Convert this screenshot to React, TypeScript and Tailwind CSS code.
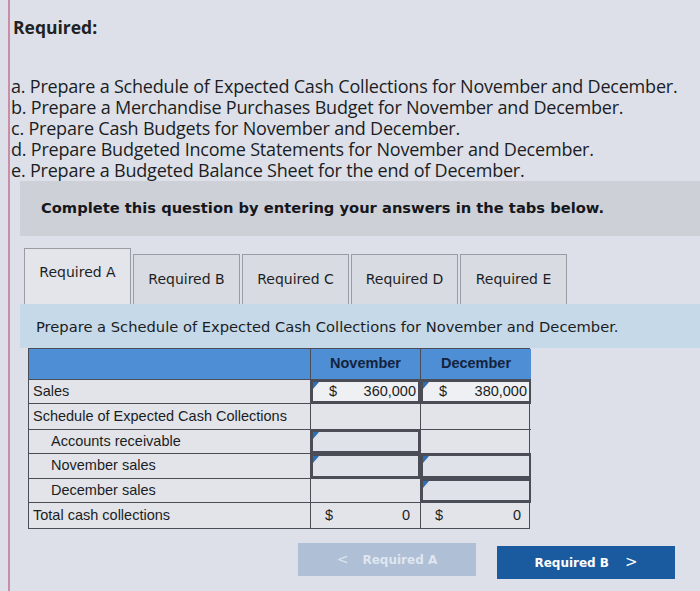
import React from "react";

const tabs = ["Required A", "Required B", "Required C", "Required D", "Required E"];

function Corner() {
    return <span className="absolute left-0 top-0 w-0 h-0 border-t-[7px] border-r-[6px] border-t-[#2f6db5] border-r-transparent" />;
}

function Money({ value, input }: { value: string; input?: boolean }) {
    return (
        <div className={`relative flex justify-between items-center h-full ${input ? "pl-[16px] pr-[2px] bg-[#eef0f3] border-2 border-[#4a4d55]" : "pl-[14px] pr-[10px]"}`}>
            {input && <Corner />}
            <span>$</span>
            <span>{value}</span>
        </div>
    );
}

function InputCell({ marker }: { marker?: boolean }) {
    return (
        <div className="relative h-full bg-[#dfe2e8] border-2 border-[#4a4d55]">
            {marker && <Corner />}
        </div>
    );
}

export default function App() {
    const list = [
        "a. Prepare a Schedule of Expected Cash Collections for November and December.",
        "b. Prepare a Merchandise Purchases Budget for November and December.",
        "c. Prepare Cash Budgets for November and December.",
        "d. Prepare Budgeted Income Statements for November and December.",
        "e. Prepare a Budgeted Balance Sheet for the end of December.",
    ];

    return (
        <div className="w-[700px] h-[591px] overflow-hidden bg-[#dde0e8] flex">
            <div className="w-[8px] shrink-0" />
            <div className="w-[2px] shrink-0 bg-[#c98ea6]" />
            <div className="flex-1 pt-[14px]">
                <h2 className="pl-[3px] text-[17.5px] leading-[27px] font-bold text-[#222] font-['Open_Sans',sans-serif]">Required:</h2>

                <div className="mt-[35px] pl-[1px] text-[18px] leading-[21px] text-[#1b1d24] font-['Open_Sans',sans-serif] tracking-[-0.2px]">
                    {list.map((l) => (
                        <p key={l}>{l}</p>
                    ))}
                </div>

                <div className="ml-[10px] h-[55px] bg-[#cdd0d6] flex items-center pl-[21px]">
                    <p className="text-[14.7px] font-bold text-[#15171c] font-['DejaVu_Sans',sans-serif]">
                        Complete this question by entering your answers in the tabs below.
                    </p>
                </div>

                <div className="ml-[10px] mt-[12px] flex gap-[2px] pl-[4px] font-['DejaVu_Sans',sans-serif] text-[14px] text-[#1d1f25]">
                    {tabs.map((t, i) => (
                        <div
                            key={t}
                            className={`w-[107px] flex items-center justify-center border border-[#9a9ca3] border-b-0 ${i === 0 ? "h-[56px] bg-[#e3e5ea] pb-[8px]" : "h-[50px] mt-[6px] bg-[#d8dbe1]"}`}
                        >
                            {t}
                        </div>
                    ))}
                </div>

                <div className="ml-[10px] bg-[#c6d9e8] pt-[12px] pb-[10px] pl-[16px] font-['DejaVu_Sans',sans-serif] text-[14.7px] leading-[22px] text-[#1b1d24]">
                    <p>Prepare a Schedule of Expected Cash Collections for November and December.</p>
                </div>

                <div className="ml-[18px] w-[502px] grid grid-cols-[282px_110px_110px] border border-[#4a4d55] font-['Liberation_Sans',sans-serif] text-[14.5px] text-[#1b1d24] bg-[#e2e4e9]">
                    <div className="h-[30px] bg-[#4d8ed4] border-r border-[#4a4d55]" />
                    <div className="h-[30px] bg-[#4d8ed4] border-r border-[#4a4d55] flex items-center justify-center font-bold text-[#14233d]">November</div>
                    <div className="h-[30px] bg-[#4d8ed4] flex items-center justify-center font-bold text-[#14233d]">December</div>

                    <div className="h-[24px] border-t border-r border-[#4a4d55] flex items-center pl-[4px]">Sales</div>
                    <div className="h-[24px] border-t border-r border-[#4a4d55]"><Money value="360,000" input /></div>
                    <div className="h-[24px] border-t border-[#4a4d55]"><Money value="380,000" input /></div>

                    <div className="h-[26px] border-t border-r border-[#4a4d55] flex items-center pl-[4px]">Schedule of Expected Cash Collections</div>
                    <div className="h-[26px] border-t border-r border-[#4a4d55]" />
                    <div className="h-[26px] border-t border-[#4a4d55]" />

                    <div className="h-[24px] border-t border-r border-[#4a4d55] flex items-center pl-[22px]">Accounts receivable</div>
                    <div className="h-[24px] border-t border-r border-[#4a4d55]"><InputCell marker /></div>
                    <div className="h-[24px] border-t border-[#4a4d55]" />

                    <div className="h-[25px] border-t border-r border-[#4a4d55] flex items-center pl-[22px]">November sales</div>
                    <div className="h-[25px] border-t border-r border-[#4a4d55]"><InputCell marker /></div>
                    <div className="h-[25px] border-t border-[#4a4d55]"><InputCell marker /></div>

                    <div className="h-[24px] border-t border-r border-[#4a4d55] flex items-center pl-[22px]">December sales</div>
                    <div className="h-[24px] border-t border-r border-[#4a4d55]" />
                    <div className="h-[24px] border-t border-[#4a4d55]"><InputCell marker /></div>

                    <div className="h-[26px] border-t border-r border-[#4a4d55] flex items-center pl-[4px]">Total cash collections</div>
                    <div className="h-[26px] border-t border-r border-[#4a4d55]"><Money value="0" /></div>
                    <div className="h-[26px] border-t border-[#4a4d55]"><Money value="0" /></div>
                </div>

                <div className="pt-[14px] flex justify-end gap-[21px] pr-[25px] font-['DejaVu_Sans',sans-serif] text-[12px] font-bold">
                    <button className="w-[178px] h-[33px] bg-[#aebfd6] text-[#dfe6f0] flex items-center justify-center gap-[14px]">
                        <span className="font-normal text-[14px]">&lt;</span> Required A
                    </button>
                    <button className="w-[178px] h-[33px] bg-[#1a5a9e] text-white flex items-center justify-center gap-[16px] mt-[3px]">
                        Required B <span className="font-normal text-[15px]">&gt;</span>
                    </button>
                </div>
            </div>
        </div>
    );
}
